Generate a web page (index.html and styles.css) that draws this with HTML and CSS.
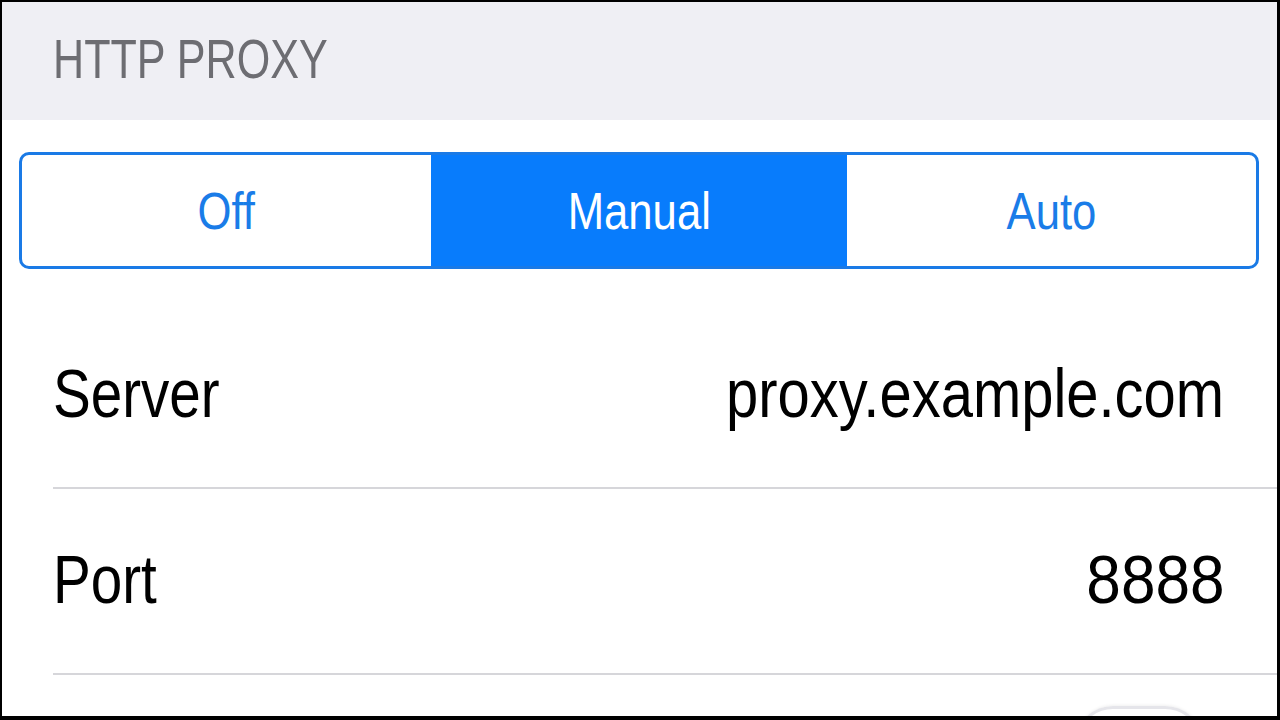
FILE: index.html
```html
<!DOCTYPE html>
<html lang="en">
<head>
    <meta charset="UTF-8">
    <title>HTTP Proxy</title>
    <link rel="stylesheet" href="styles.css">
</head>
<body>
    <div class="screen">
        <div class="section-header">
            <span class="header-text">HTTP PROXY</span>
        </div>

        <div class="segmented">
            <div class="segment"><span class="seg-text">Off</span></div>
            <div class="segment active"><span class="seg-text">Manual</span></div>
            <div class="segment"><span class="seg-text">Auto</span></div>
        </div>

        <div class="row first">
            <span class="label">Server</span>
            <span class="value">proxy.example.com</span>
        </div>
        <div class="row">
            <span class="label">Port</span>
            <span class="value digits">8888</span>
        </div>
        <div class="row last">
            <div class="switch"></div>
        </div>
    </div>
</body>
</html>
```

FILE: styles.css
```css
html, body {
    margin: 0;
    padding: 0;
    background-color: #000;
}

body {
    font-family: 'Liberation Sans', Arial, sans-serif;
}

.screen {
    margin: 2px 3px 4px 2px;
    height: 714px;
    background-color: white;
    overflow: hidden;
}

.section-header {
    box-sizing: border-box;
    height: 118px;
    padding: 29px 0 0 51px;
    background-color: #efeff4;
}

.header-text {
    display: inline-block;
    font-size: 56px;
    line-height: 56px;
    color: #6d6d72;
    transform: scaleX(0.77);
    transform-origin: left center;
}

.segmented {
    box-sizing: border-box;
    display: flex;
    height: 117px;
    margin: 32px 18px 0 17px;
    border: 3px solid #1a7ae6;
    border-radius: 10px;
    overflow: hidden;
}

.segment {
    flex: 1;
    display: flex;
    align-items: center;
    justify-content: center;
    color: #1a7ce8;
}

.segment.active {
    flex: 1.02;
    background-color: #087cfc;
    color: white;
}

.seg-text {
    display: inline-block;
    font-size: 52px;
    line-height: 52px;
    transform: scaleX(0.84);
}

.row {
    box-sizing: border-box;
    display: flex;
    align-items: center;
    justify-content: space-between;
    height: 186px;
    margin-left: 51px;
    padding: 0 53px 4px 0;
    border-bottom: 2px solid #d6d6da;
    color: #000;
}

.row.first {
    margin-top: 34px;
}

.label, .value {
    display: inline-block;
    font-size: 69px;
    line-height: 69px;
    transform: scaleX(0.82);
}

.label {
    transform-origin: left center;
}

.value {
    transform-origin: right center;
    transform: scaleX(0.84);
}

.value.digits {
    transform: scaleX(0.9);
}

.row.last {
    align-items: flex-start;
    justify-content: flex-end;
    padding: 31px 74px 0 0;
    border-bottom: none;
}

.switch {
    width: 128px;
    height: 76px;
    box-sizing: border-box;
    border: 3px solid #e5e5ea;
    border-radius: 38px;
    box-shadow: 0 -1px 3px rgba(0, 0, 0, 0.06);
}
```
